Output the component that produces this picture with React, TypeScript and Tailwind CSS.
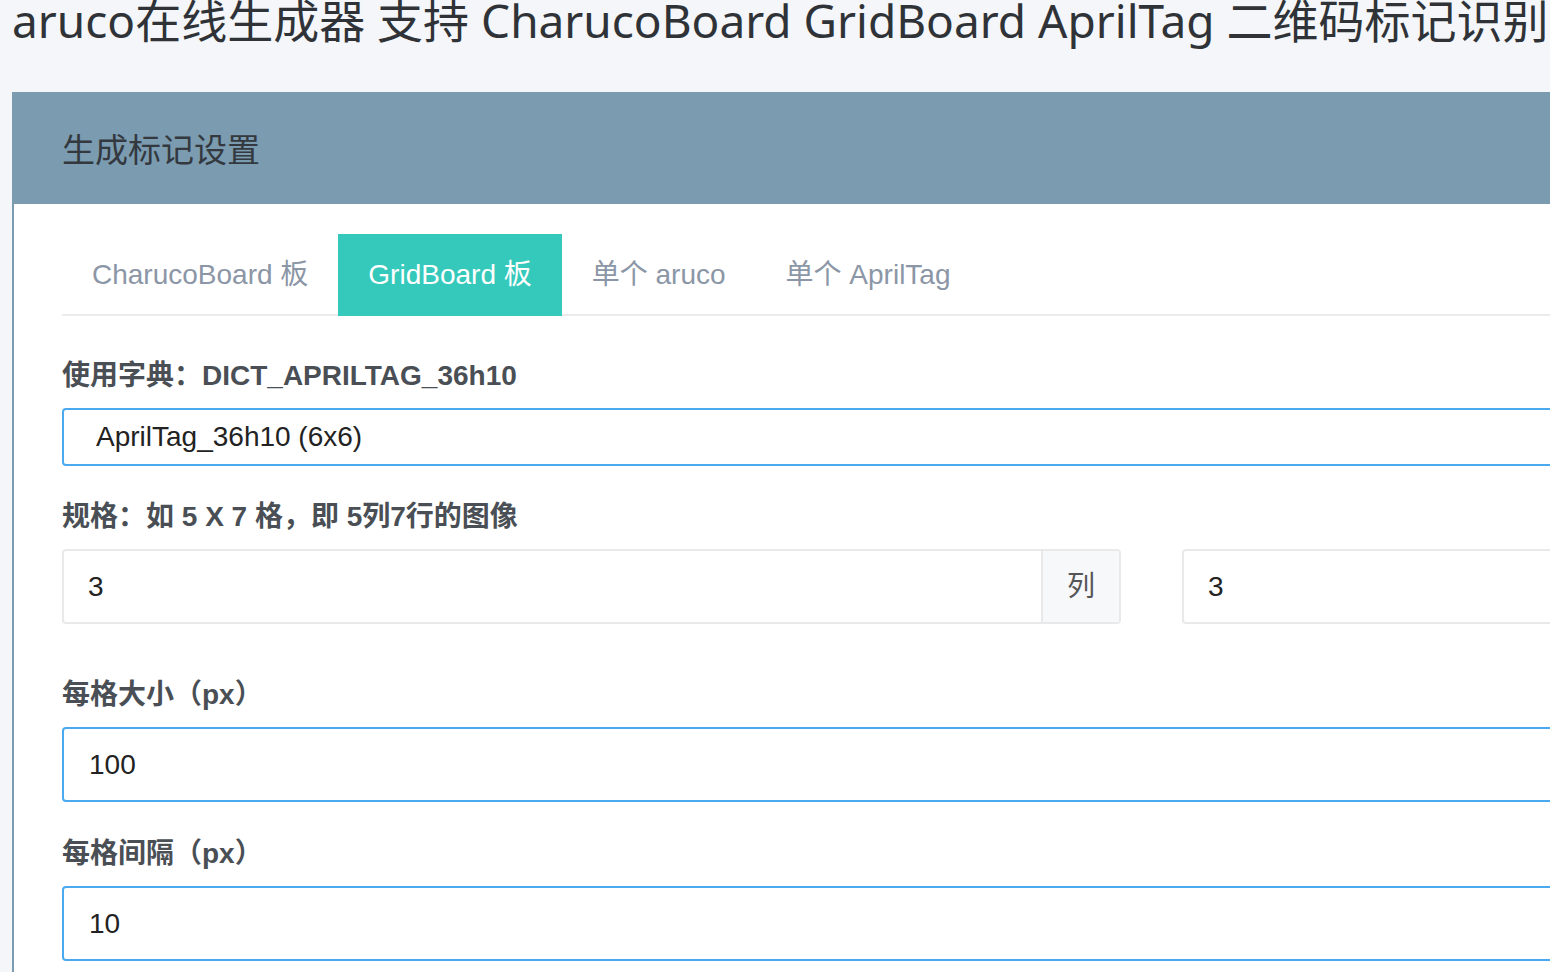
import React from 'react'

const sans = { fontFamily: '"Liberation Sans", Arial, "Noto Sans CJK SC", sans-serif' }

const tabs = ['CharucoBoard 板', 'GridBoard 板', '单个 aruco', '单个 AprilTag']

function Label({ children }: { children: React.ReactNode }) {
  return (
    <div className="h-[36px] leading-[36px] mb-[14px] text-[28px] font-bold text-[#4a4f55] whitespace-nowrap">
      {children}
    </div>
  )
}

function BlueInput({ value, select = false }: { value: string; select?: boolean }) {
  return (
    <div
      className={`border-2 border-[#4aa9ef] rounded-[4px] bg-white flex items-center text-[28px] text-[#222] ${
        select ? 'h-[58px] pl-[32px]' : 'h-[75px] pl-[25px]'
      }`}
    >
      {value}
    </div>
  )
}

function GroupInput({ value, addon }: { value: string; addon: string }) {
  return (
    <div className="flex h-[75px] border-2 border-[#e9e9e9] rounded-[4px] bg-white">
      <div className="flex-1 flex items-center pl-[24px] text-[28px] text-[#222]">{value}</div>
      <div className="w-[78px] border-l-2 border-[#e9e9e9] bg-[#f7f8fa] flex items-center justify-center text-[28px] text-[#555]">
        {addon}
      </div>
    </div>
  )
}

export default function App() {
  const active = 1

  return (
    <div className="w-screen h-screen overflow-hidden bg-[#f4f6f9]" style={sans}>
      {/* Title */}
      <h1
        className="pl-[12px] mt-[-4px] h-[48px] leading-[48px] text-[46px] text-[#2f3337] whitespace-nowrap"
        style={{ fontFamily: '"Noto Sans", "Noto Sans CJK SC", sans-serif' }}
      >
        aruco在线生成器 支持 CharucoBoard GridBoard AprilTag 二维码标记识别
      </h1>

      {/* Panel */}
      <div className="ml-[12px] mt-[48px] w-[2290px]">
        <div className="h-[112px] bg-[#7b9bb0] flex items-center pl-[50px] pt-[6px] text-[33px] text-[#33393f]">
          生成标记设置
        </div>

        <div className="bg-white border-l-2 border-[#7b9bb0] pl-[48px] pt-[30px] pb-[40px]">
          {/* Tabs */}
          <div className="flex border-b-2 border-[#ebebeb] h-[82px]">
            {tabs.map((t, i) => (
              <div
                key={t}
                className={`px-[30px] h-[82px] flex items-center text-[28px] whitespace-nowrap ${
                  i === active ? 'bg-[#35c9bb] text-white' : 'text-[#8b96a6]'
                }`}
              >
                {t}
              </div>
            ))}
          </div>

          <div className="mt-[42px]">
            <div className="mb-[33px]">
              <Label>使用字典：DICT_APRILTAG_36h10</Label>
              <BlueInput value="AprilTag_36h10 (6x6)" select />
            </div>

            <div className="mb-[53px]">
              <Label>规格：如 5 X 7 格，即 5列7行的图像</Label>
              <div className="grid grid-cols-[1059px_1059px] gap-[61px]">
                <GroupInput value="3" addon="列" />
                <GroupInput value="3" addon="行" />
              </div>
            </div>

            <div className="mb-[34px]">
              <Label>每格大小（px）</Label>
              <BlueInput value="100" />
            </div>

            <div className="mb-[33px]">
              <Label>每格间隔（px）</Label>
              <BlueInput value="10" />
            </div>
          </div>
        </div>
      </div>
    </div>
  )
}
